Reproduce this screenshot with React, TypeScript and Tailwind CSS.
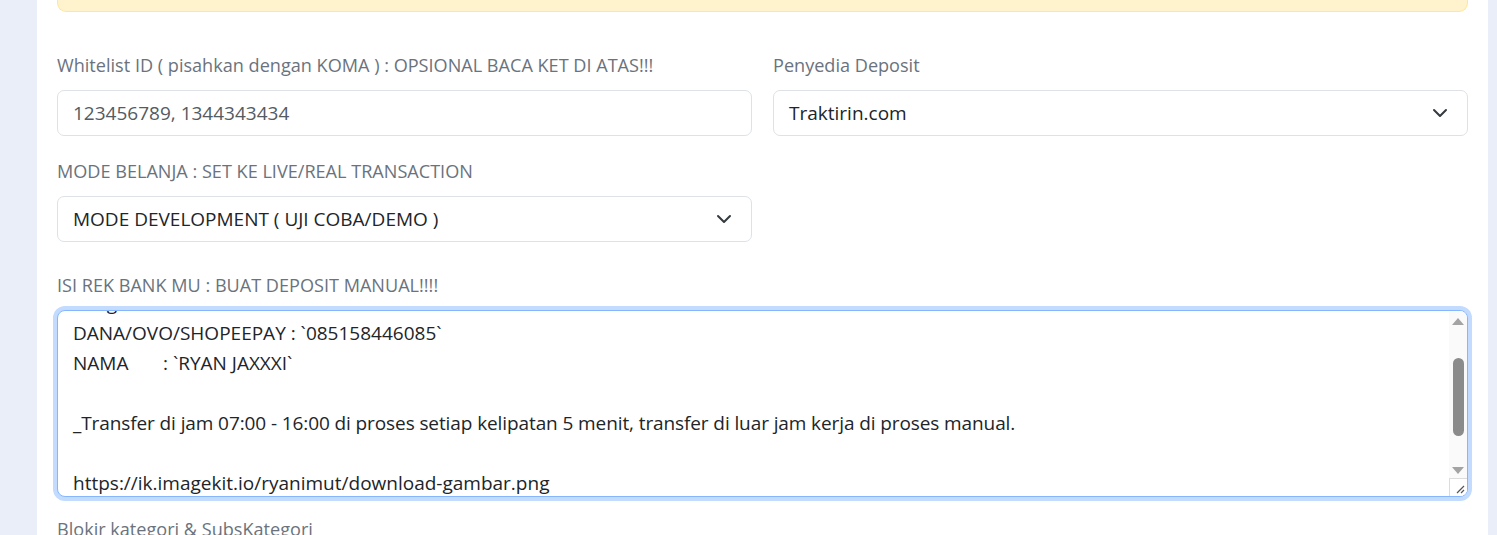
import React from "react";

const fontStack = { fontFamily: '"Open Sans", "Noto Sans", sans-serif' };

const Chevron = () => (
  <svg viewBox="0 0 16 16" className="w-4 h-4 text-[#343a40]" fill="none">
    <path d="M2 5l6 6 6-6" stroke="currentColor" strokeWidth="2" strokeLinecap="round" strokeLinejoin="round" />
  </svg>
);

const Label = ({ children, className = "" }: { children: React.ReactNode; className?: string }) => (
  <div className={`text-[18.1px] leading-[30px] text-[#6a737d] mb-[10px] ${className}`}>{children}</div>
);

const SelectBox = ({ value }: { value: string }) => (
  <div className="h-[46px] flex items-center justify-between rounded-[7px] border border-[#dee2e6] bg-white pl-[15px] pr-[19px] text-[19px] text-[#212529]">
    <span>{value}</span>
    <Chevron />
  </div>
);

const FakeScrollbar = () => (
  <div className="w-[18px] h-full flex flex-col bg-[#fafafa]">
    <div className="flex-1 flex flex-col items-center pt-[7px] pb-[4px]">
      <div className="w-0 h-0 border-l-[6px] border-r-[6px] border-b-[7px] border-l-transparent border-r-transparent border-b-[#a3a3a3]" />
      <div className="mt-[33px] w-[11px] h-[78px] rounded-full bg-[#8b8b8b]" />
      <div className="mt-auto w-0 h-0 border-l-[6px] border-r-[6px] border-t-[7px] border-l-transparent border-r-transparent border-t-[#a3a3a3]" />
    </div>
    <div className="h-[18px] border-l border-t border-[#dcdcdc] bg-white flex items-end justify-end pr-[2px] pb-[2px]">
      <svg viewBox="0 0 10 10" className="w-[10px] h-[10px]">
        <path d="M2 9L9 2M6 9L9 6" stroke="#555" strokeWidth="1.2" />
      </svg>
    </div>
  </div>
);

export default function App() {
  return (
    <div className="w-[1497px] h-[535px] overflow-hidden bg-[#eaeef8] flex" style={fontStack}>
      <div className="w-[37px] shrink-0" />
      <div className="w-[1451px] shrink-0 bg-white px-[20px]">
        <div className="h-[11px] -mt-[20px] box-content pt-[20px] bg-[#fff3cd] border border-t-0 border-[#ffe69c] rounded-b-[9px]" />

        <div className="grid grid-cols-2 gap-x-[21px] mt-[38px]">
          <div>
            <Label>Whitelist ID ( pisahkan dengan KOMA ) : OPSIONAL BACA KET DI ATAS!!!</Label>
            <div className="h-[46px] flex items-center rounded-[7px] border border-[#dee2e6] bg-white px-[15px] text-[19px] text-[#545b62]">
              123456789, 1344343434
            </div>
          </div>
          <div>
            <Label>Penyedia Deposit</Label>
            <SelectBox value="Traktirin.com" />
          </div>
          <div className="mt-[20px]">
            <Label>MODE BELANJA : SET KE LIVE/REAL TRANSACTION</Label>
            <SelectBox value="MODE DEVELOPMENT ( UJI COBA/DEMO )" />
          </div>
        </div>

        <div className="mt-[28px]">
          <Label>ISI REK BANK MU : BUAT DEPOSIT MANUAL!!!!</Label>
          <div className="rounded-[8px] ring-4 ring-[#c2dbfe] border border-[#86b7fe] bg-white h-[187px] flex overflow-hidden">
            <div className="flex-1 overflow-hidden pl-[15px] text-[19px] leading-[30px] text-[#212529]">
              <div className="-mt-[23px] whitespace-pre">
                <div>Pengisian SALDO :</div>
                <div>DANA/OVO/SHOPEEPAY : `085158446085`</div>
                <div>NAMA       : `RYAN JAXXXI`</div>
                <div>&nbsp;</div>
                <div className="tracking-[-0.1px]">_Transfer di jam 07:00 - 16:00 di proses setiap kelipatan 5 menit, transfer di luar jam kerja di proses manual.</div>
                <div>&nbsp;</div>
                <div>https://ik.imagekit.io/ryanimut/download-gambar.png</div>
              </div>
            </div>
            <FakeScrollbar />
          </div>
        </div>

        <div className="mt-[17px]">
          <Label>Blokir kategori &amp; SubsKategori</Label>
        </div>
      </div>
    </div>
  );
}
